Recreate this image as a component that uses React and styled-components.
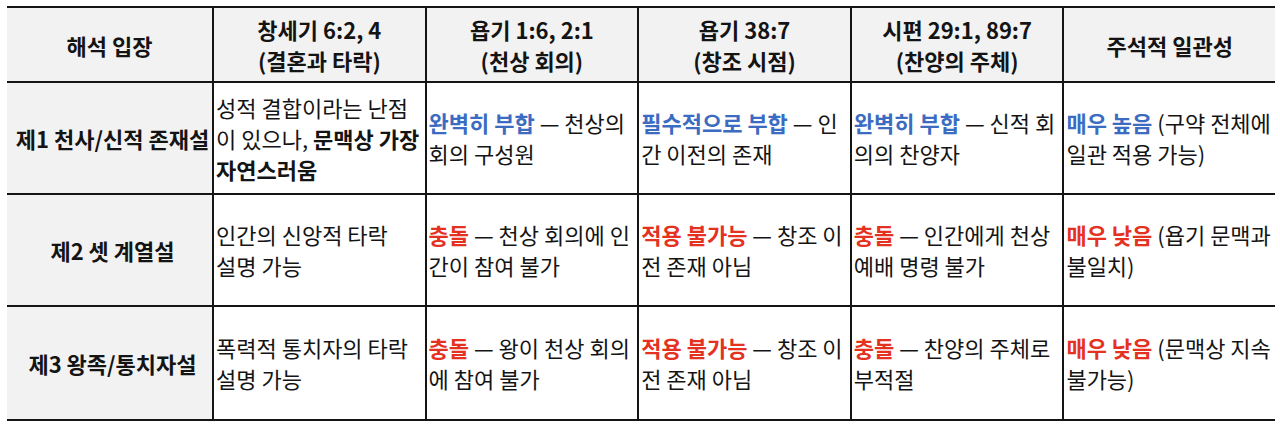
import React from 'react';
import styled, { createGlobalStyle } from 'styled-components';

const colors = {
  line: '#151515',
  head: '#f2f2f2',
  text: '#141414',
  blue: '#3b6cc2',
  red: '#e5311f',
};

const GlobalStyle = createGlobalStyle`
  html, body {
    margin: 0;
    padding: 0;
    background: #fff;
  }
  body {
    font-family: "Noto Sans CJK KR", "Noto Sans", sans-serif;
    color: ${colors.text};
  }
`;

const headers = [
  ['해석 입장'],
  ['창세기 6:2, 4', '(결혼과 타락)'],
  ['욥기 1:6, 2:1', '(천상 회의)'],
  ['욥기 38:7', '(창조 시점)'],
  ['시편 29:1, 89:7', '(찬양의 주체)'],
  ['주석적 일관성'],
];

const B = ({ children }) => <Strong>{children}</Strong>;
const Blue = ({ children }) => <Mark tone="blue">{children}</Mark>;
const Red = ({ children }) => <Mark tone="red">{children}</Mark>;

// each cell is a list of lines, wrapped as in the source sheet
const rows = [
  {
    label: '제1 천사/신적 존재설',
    cells: [
      ['성적 결합이라는 난점', <>이 있으나, <B>문맥상 가장</B></>, <B>자연스러움</B>],
      [<><Blue>완벽히 부합</Blue> — 천상의</>, '회의 구성원'],
      [<><Blue>필수적으로 부합</Blue> — 인</>, '간 이전의 존재'],
      [<><Blue>완벽히 부합</Blue> — 신적 회</>, '의의 찬양자'],
      [<><Blue>매우 높음</Blue> (구약 전체에</>, '일관 적용 가능)'],
    ],
  },
  {
    label: '제2 셋 계열설',
    cells: [
      ['인간의 신앙적 타락', '설명 가능'],
      [<><Red>충돌</Red> — 천상 회의에 인</>, '간이 참여 불가'],
      [<><Red>적용 불가능</Red> — 창조 이</>, '전 존재 아님'],
      [<><Red>충돌</Red> — 인간에게 천상</>, '예배 명령 불가'],
      [<><Red>매우 낮음</Red> (욥기 문맥과</>, '불일치)'],
    ],
  },
  {
    label: '제3 왕족/통치자설',
    cells: [
      ['폭력적 통치자의 타락', '설명 가능'],
      [<><Red>충돌</Red> — 왕이 천상 회의</>, '에 참여 불가'],
      [<><Red>적용 불가능</Red> — 창조 이</>, '전 존재 아님'],
      [<><Red>충돌</Red> — 찬양의 주체로</>, '부적절'],
      [<><Red>매우 낮음</Red> (문맥상 지속</>, '불가능)'],
    ],
  },
];

function App() {
  return (
    <>
      <GlobalStyle />
      <Page>
        <Grid>
          {headers.map((lines, i) => (
            <HeadCell key={i} first={i === 0}>
              {lines.map((l, j) => <Line key={j}>{l}</Line>)}
            </HeadCell>
          ))}
          {rows.map((row, r) => (
            <React.Fragment key={r}>
              <LabelCell last={r === rows.length - 1}>{row.label}</LabelCell>
              {row.cells.map((lines, i) => (
                <BodyCell key={i} last={r === rows.length - 1}>
                  {lines.map((l, j) => <Line key={j}>{l}</Line>)}
                </BodyCell>
              ))}
            </React.Fragment>
          ))}
        </Grid>
      </Page>
    </>
  );
}

const Page = styled.div`
  padding: 6px 5px 0 7px;
  width: 1268px;
`;

const Grid = styled.div`
  display: grid;
  grid-template-columns: 205px repeat(5, 1fr);
  grid-template-rows: 75px repeat(3, 112px);
  border-top: 2px solid ${colors.line};
  border-bottom: 2px solid ${colors.line};
  font-size: 22px;
  line-height: 31px;
`;

const Cell = styled.div`
  box-sizing: border-box;
  display: flex;
  flex-direction: column;
  justify-content: center;
  overflow: hidden;
`;

const HeadCell = styled(Cell)`
  background: ${colors.head};
  align-items: center;
  text-align: center;
  font-weight: 700;
  border-bottom: 2px solid ${colors.line};
  border-left: ${p => (p.first ? 'none' : `2px solid ${colors.line}`)};
  padding-top: 1px;
`;

const LabelCell = styled(Cell)`
  background: ${colors.head};
  align-items: center;
  text-align: center;
  font-weight: 700;
  padding-left: 6px;
  border-bottom: ${p => (p.last ? 'none' : `2px solid ${colors.line}`)};
`;

const BodyCell = styled(Cell)`
  padding: 0 2px 0 2px;
  border-left: 2px solid ${colors.line};
  border-bottom: ${p => (p.last ? 'none' : `2px solid ${colors.line}`)};
`;

const Line = styled.div`
  white-space: nowrap;
`;

const Strong = styled.b`
  font-weight: 700;
`;

const Mark = styled.span`
  font-weight: 700;
  color: ${p => (p.tone === 'blue' ? colors.blue : colors.red)};
`;

export default App;
